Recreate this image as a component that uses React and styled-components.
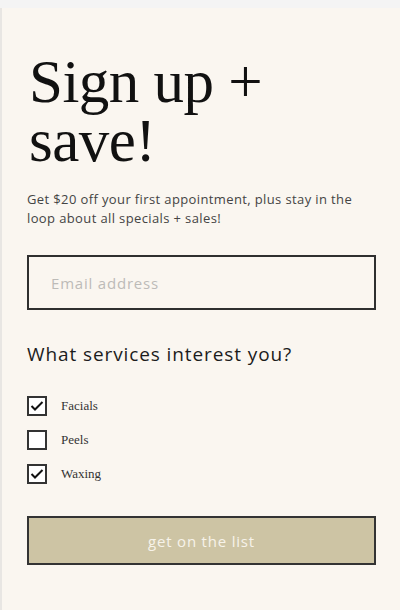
import React, { useState } from "react";
import styled, { createGlobalStyle } from "styled-components";

const Global = createGlobalStyle`
  html, body { margin: 0; padding: 0; background: #f4f4f4; }
  * { box-sizing: border-box; }
`;

const Page = styled.div`
  padding-top: 8px;
  background: #f4f4f4;
`;

const Card = styled.div`
  min-height: 602px;
  background: #faf6f0;
  border-left: 2px solid #e8e6e3;
  padding: 44px 24px 40px 25px;
  display: flex;
  flex-direction: column;
`;

const Title = styled.h1`
  margin: 0 0 0 2px;
  font-family: "Liberation Serif", "DejaVu Serif", serif;
  font-weight: 400;
  font-size: 61px;
  line-height: 59px;
  color: #111;
  letter-spacing: -0.5px;
`;

const Lead = styled.p`
  margin: 20px 0 0;
  font-family: "Open Sans", sans-serif;
  font-size: 13px;
  line-height: 19px;
  letter-spacing: 0.38px;
  color: #444;
`;

const Input = styled.input`
  margin-top: 27px;
  height: 55px;
  width: 100%;
  border: 2px solid #2f2f2f;
  background: transparent;
  padding: 0 22px;
  font-family: "Open Sans", sans-serif;
  font-size: 15px;
  letter-spacing: 0.8px;
  color: #333;
  outline: none;
  &::placeholder { color: #bdbbb8; }
`;

const Question = styled.h2`
  margin: 32px 0 0;
  font-family: "Open Sans", sans-serif;
  font-weight: 400;
  font-size: 19px;
  line-height: 24px;
  letter-spacing: 0.9px;
  color: #1c1c1c;
`;

const Options = styled.div`
  margin-top: 30px;
  display: flex;
  flex-direction: column;
  gap: 14px;
`;

const Option = styled.label`
  display: flex;
  align-items: center;
  gap: 14px;
  cursor: pointer;
  font-family: "Liberation Serif", serif;
  font-size: 13px;
  color: #333;
`;

const Box = styled.span`
  width: 20px;
  height: 20px;
  border: 2px solid #333;
  background: #fff;
  display: flex;
  align-items: center;
  justify-content: center;
`;

const Button = styled.button`
  margin-top: 32px;
  height: 49px;
  width: 100%;
  background: #cdc4a4;
  border: 2px solid #333;
  color: #f7f3ea;
  font-family: "Open Sans", sans-serif;
  font-size: 15px;
  letter-spacing: 0.8px;
  cursor: pointer;
`;

const Check = () => (
  <svg width="14" height="12" viewBox="0 0 14 12">
    <polyline points="1.5,6 5,9.5 12.5,2" fill="none" stroke="#111" strokeWidth="2" />
  </svg>
);

export default function App() {
  const [sel, setSel] = useState({ Facials: true, Peels: false, Waxing: true });
  return (
    <Page>
      <Global />
      <Card>
        <Title>
          Sign up +<br />save!
        </Title>
        <Lead>
          Get $20 off your first appointment, plus stay in the loop about all specials + sales!
        </Lead>
        <Input placeholder="Email address" />
        <Question>What services interest you?</Question>
        <Options>
          {Object.keys(sel).map((k) => (
            <Option key={k} onClick={() => setSel({ ...sel, [k]: !sel[k] })}>
              <Box>{sel[k] && <Check />}</Box>
              {k}
            </Option>
          ))}
        </Options>
        <Button>get on the list</Button>
      </Card>
    </Page>
  );
}
